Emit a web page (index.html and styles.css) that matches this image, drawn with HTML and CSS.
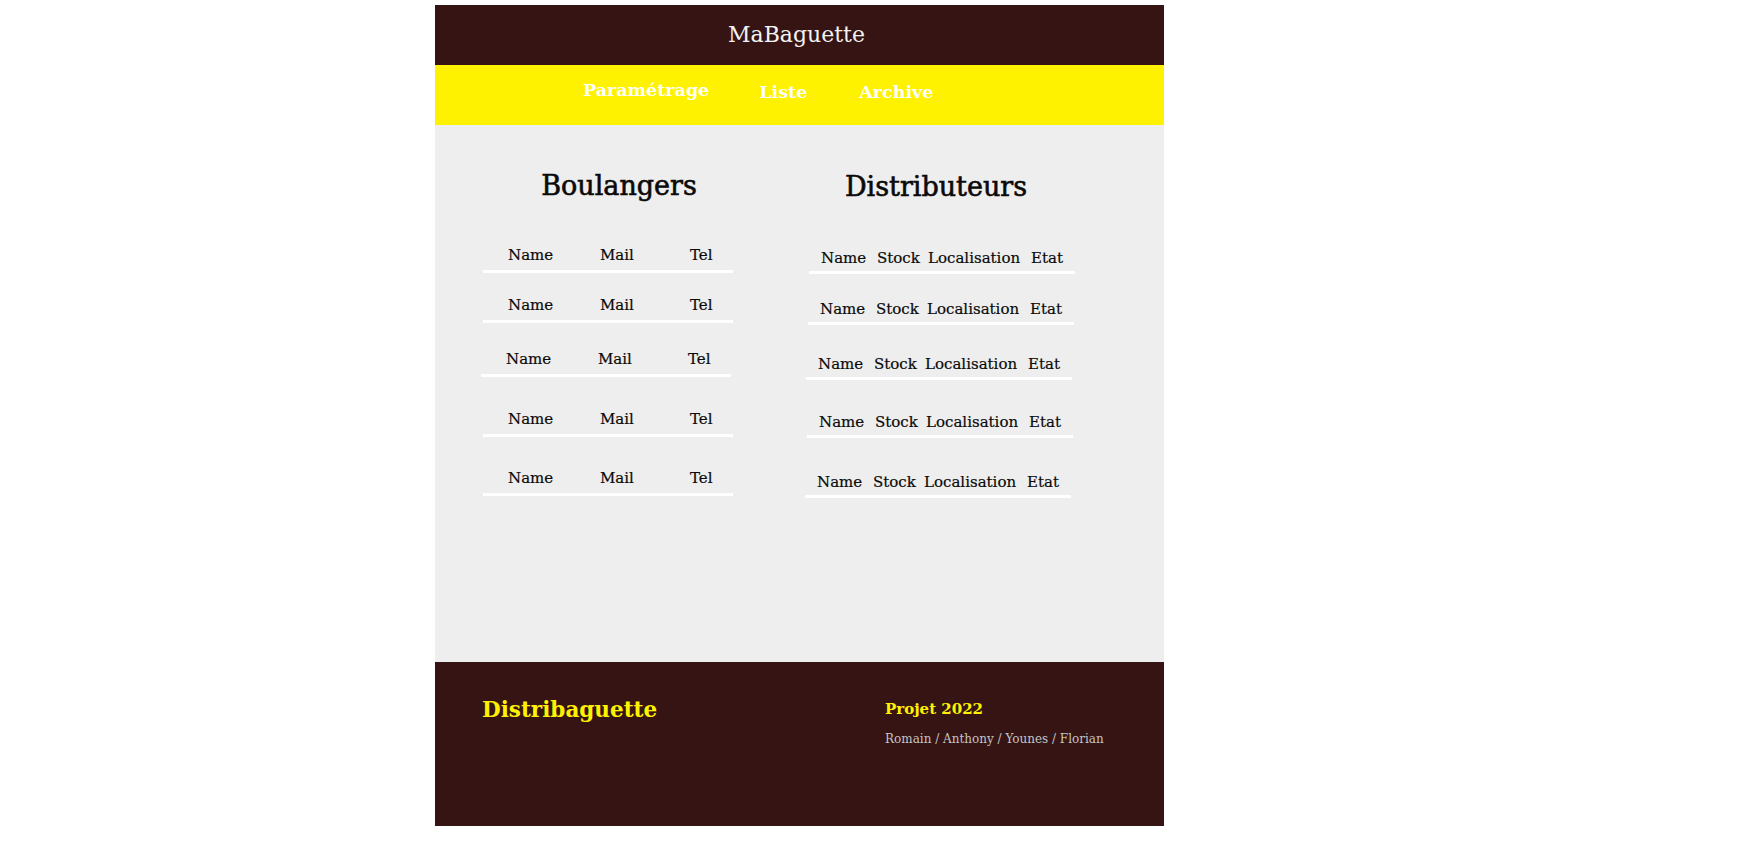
FILE: index.html
```html
<!DOCTYPE html>
<html lang="fr">
<head>
<meta charset="utf-8">
<title>MaBaguette</title>
<link rel="stylesheet" href="styles.css">
</head>
<body>
<div class="page">
  <header class="site-header">MaBaguette</header>
  <nav class="site-nav">
    <a class="nav-link nav-link--first" href="#">Paramétrage</a>
    <a class="nav-link" href="#">Liste</a>
    <a class="nav-link nav-link--last" href="#">Archive</a>
  </nav>
  <main class="content">
    <section class="panel panel--bakers">
      <h2 class="panel-title">Boulangers</h2>
      <div class="rows">
        <div class="row"><span>Name</span><span>Mail</span><span>Tel</span></div>
        <div class="row"><span>Name</span><span>Mail</span><span>Tel</span></div>
        <div class="row"><span>Name</span><span>Mail</span><span>Tel</span></div>
        <div class="row"><span>Name</span><span>Mail</span><span>Tel</span></div>
        <div class="row"><span>Name</span><span>Mail</span><span>Tel</span></div>
      </div>
    </section>
    <section class="panel panel--dist">
      <h2 class="panel-title">Distributeurs</h2>
      <div class="rows">
        <div class="row"><span>Name</span><span>Stock</span><span>Localisation</span><span>Etat</span></div>
        <div class="row"><span>Name</span><span>Stock</span><span>Localisation</span><span>Etat</span></div>
        <div class="row"><span>Name</span><span>Stock</span><span>Localisation</span><span>Etat</span></div>
        <div class="row"><span>Name</span><span>Stock</span><span>Localisation</span><span>Etat</span></div>
        <div class="row"><span>Name</span><span>Stock</span><span>Localisation</span><span>Etat</span></div>
      </div>
    </section>
  </main>
  <footer class="site-footer">
    <div class="footer-brand">Distribaguette</div>
    <div class="footer-info">
      <div class="footer-project">Projet 2022</div>
      <div class="footer-names">Romain / Anthony / Younes / Florian</div>
    </div>
  </footer>
</div>
</body>
</html>
```
FILE: styles.css
```css
html, body {
  margin: 0;
  padding: 0;
  background: #ffffff;
}

body {
  font-family: "DejaVu Serif", "Liberation Serif", serif;
  color: #111111;
}

.page {
  width: 729px;
  margin: 5px 0 0 435px;
}

.site-header {
  height: 60px;
  line-height: 60px;
  background: #351413;
  color: #f2f2f2;
  font-size: 22px;
  text-align: center;
  padding-right: 6px;
}

.site-nav {
  height: 60px;
  box-sizing: border-box;
  background: #fff200;
  display: flex;
  align-items: flex-start;
  padding: 15px 0 0 148px;
  gap: 50px;
}

.nav-link {
  color: #ffffff;
  text-decoration: none;
  font-weight: bold;
  font-size: 17.5px;
  line-height: 24px;
}

.nav-link--first {
  margin-top: -2px;
}

.nav-link--last {
  margin-left: 2px;
}

.content {
  height: 537px;
  box-sizing: border-box;
  background: #eeeeee;
  display: grid;
  grid-template-columns: 250px 266px;
  column-gap: 76px;
  align-items: start;
  padding: 45px 0 0 48px;
}

.panel-title {
  margin: 0;
  font-size: 27px;
  font-weight: normal;
  line-height: 32px;
  text-align: center;
  color: #0a0a0a;
  -webkit-text-stroke: 0.6px #0a0a0a;
}

.panel--bakers .panel-title {
  padding-left: 22px;
}

.panel--dist {
  padding-top: 1px;
}

.panel--dist .panel-title {
  padding-right: 12px;
}

.row {
  display: grid;
  font-size: 15px;
  line-height: 20px;
  color: #0a0a0a;
  -webkit-text-stroke: 0.2px #0a0a0a;
  border-bottom: 3px solid #ffffff;
  white-space: nowrap;
}

/* Boulangers rows */
.panel--bakers .row {
  grid-template-columns: 92px 90px 1fr;
  padding: 0 0 5px 25px;
}

.panel--bakers .row:nth-child(1) { margin-top: 43px; }
.panel--bakers .row:nth-child(2) { margin-top: 22px; }
.panel--bakers .row:nth-child(3) { margin-top: 26px; margin-left: -2px; margin-right: 2px; }
.panel--bakers .row:nth-child(4) { margin-top: 32px; }
.panel--bakers .row:nth-child(5) { margin-top: 31px; }

/* Distributeurs rows */
.panel--dist .row {
  grid-template-columns: 56px 51px 103px 1fr;
  padding: 0 0 3px 12px;
}

.panel--dist .row:nth-child(1) { margin-top: 45px; }
.panel--dist .row:nth-child(2) { margin-top: 25px; margin-left: -1px; margin-right: 1px; }
.panel--dist .row:nth-child(3) { margin-top: 29px; margin-left: -3px; margin-right: 3px; }
.panel--dist .row:nth-child(4) { margin-top: 32px; margin-left: -2px; margin-right: 2px; }
.panel--dist .row:nth-child(5) { margin-top: 34px; margin-left: -4px; margin-right: 4px; }

.site-footer {
  height: 164px;
  box-sizing: border-box;
  background: #351413;
  display: grid;
  grid-template-columns: 403px 1fr;
  padding: 35px 0 0 47px;
  align-items: start;
}

.footer-brand {
  color: #fff200;
  font-weight: bold;
  font-size: 21.5px;
  line-height: 26px;
}

.footer-info {
  padding-top: 3px;
}

.footer-project {
  color: #fff200;
  font-weight: bold;
  font-size: 15px;
  line-height: 18px;
}

.footer-names {
  margin-top: 14px;
  color: #c4c4c4;
  font-size: 12px;
  line-height: 15px;
}
```
